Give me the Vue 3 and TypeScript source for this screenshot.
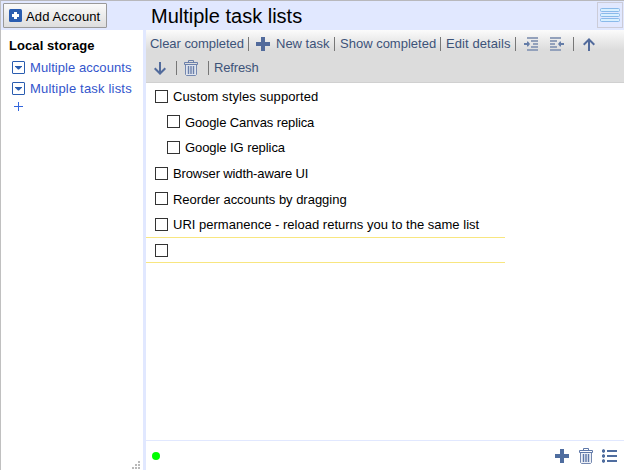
<script setup lang="ts">
interface Entry { title: string; child?: boolean; spacing: string }

const lists: Entry[] = [
  { title: 'Multiple accounts', spacing: '0.06px' },
  { title: 'Multiple task lists', spacing: '0.19px' },
]
const tasks: Entry[] = [
  { title: 'Custom styles supported', spacing: '0.1px' },
  { title: 'Google Canvas replica', child: true, spacing: '-0.11px' },
  { title: 'Google IG replica', child: true, spacing: '-0.07px' },
  { title: 'Browser width-aware UI', spacing: '-0.12px' },
  { title: 'Reorder accounts by dragging', spacing: '-0.02px' },
  { title: 'URI permanence - reload returns you to the same list', spacing: '0.01px' },
]
</script>

<template>
  <div class="app">
    <header class="header">
      <button class="add-account">
        <svg width="13" height="13" viewBox="0 0 13 13"><rect width="13" height="13" rx="1.5" fill="#2a5db0" /><path d="M5 3h3v2h2v3H8v2H5V8H3V5h2z" fill="#fff" /></svg>
        <span class="add-label">Add Account</span>
      </button>
      <h1 class="title">Multiple task lists</h1>
      <button class="menu-button">
        <svg width="20" height="14" viewBox="0 0 20 14" fill="#d8f0ff" stroke="#8abaea"><rect x=".5" y=".5" width="19" height="3" rx="1" /><rect x=".5" y="5.5" width="19" height="3" rx="1" /><rect x=".5" y="10.5" width="19" height="3" rx="1" /></svg>
      </button>
    </header>

    <div class="body">
      <aside class="sidebar">
        <h2 class="account">Local storage</h2>
        <div v-for="item in lists" :key="item.title" class="list">
          <svg width="13" height="13" viewBox="0 0 13 13"><rect x=".5" y=".5" width="12" height="12" rx=".5" fill="#fff" stroke="#2a5db0" /><path d="M3 5h7v.5L7 8.500H6L3 5.500z" fill="#2a5db0" /></svg>
          <span :style="{ letterSpacing: item.spacing }">{{ item.title }}</span>
        </div>
        <svg class="add-list" width="9" height="9" viewBox="0 0 9 9"><path d="M4 0h1v4h4v1H5v4H4V5H0V4h4z" fill="#3366dd" /></svg>
        <svg class="grip" width="8" height="8" viewBox="0 0 8 8" fill="#b9b9b9"><path d="M6 0h2v2H6zM3 3h2v2H3zM6 3h2v2H6zM0 6h2v2H0zM3 6h2v2H3zM6 6h2v2H6z" /></svg>
      </aside>

      <main class="main">
        <div class="toolbar">
          <div class="tools">
            <span class="tool clear">Clear completed</span>
            <i class="sep" />
            <svg class="plus" width="14" height="14" viewBox="0 0 14 14"><path d="M5 0h4v5h5v4H9v5H5V9H0V5h5z" fill="#526b9c" /></svg>
            <span class="tool new">New task</span>
            <i class="sep" />
            <span class="tool show">Show completed</span>
            <i class="sep" />
            <span class="tool edit">Edit details</span>
            <i class="sep" />
            <svg class="indent" width="14" height="14" viewBox="0 0 14 14" fill="#93a1bb"><path d="M3 0h11v2H3zM7 3h7v2H7zM9 6h5v2H9zM7 9h7v2H7zM3 12h11v2H3z" /><path d="M0 6h3V4.500h1L6 7 4 9.500H3V8H0z" fill="#657da8" /></svg>
            <svg class="outdent" width="14" height="14" viewBox="0 0 14 14" fill="#93a1bb"><path d="M0 0h11v2H0zM0 3h7v2H0zM0 6h5v2H0zM0 9h7v2H0zM0 12h11v2H0z" /><path d="M14 6h-3V4.500h-1L8 7l2 2.500h1V8h3z" fill="#657da8" /></svg>
            <i class="sep" />
            <svg class="up" width="12" height="13" viewBox="0 0 12 13" fill="none" stroke="#526b9c" stroke-width="2"><path d="M6 13V1.500M.7 6.800L6 1.500l5.300 5.300" /></svg>
          </div>
          <div class="tools second">
            <svg class="down" width="12" height="13" viewBox="0 0 12 13" fill="none" stroke="#526b9c" stroke-width="2"><path d="M6 0v11.500M.7 6.200L6 11.500l5.300-5.300" /></svg>
            <i class="sep" />
            <svg class="trash" width="14" height="16" viewBox="0 0 14 16" fill="none" stroke="#6b80ab"><path d="M1.500 4.500h11v10l-1 1h-9l-1-1z" fill="#dfe4ee" stroke="#7488b0" /><path d="M4.500 2V.5h5V2M.5 4.500v-2h13v2z" /><path d="M4.500 6v8M7 6v8M9.500 6v8" stroke-width="1.400" /></svg>
            <i class="sep" />
            <span class="tool refresh">Refresh</span>
          </div>
        </div>

        <div class="tasks">
          <div v-for="task in tasks" :key="task.title" class="task" :class="{ child: task.child }">
            <i class="box" /><span class="task-title" :style="{ letterSpacing: task.spacing }">{{ task.title }}</span>
          </div>
          <div class="task active"><i class="box" /></div>
        </div>

        <footer class="footer">
          <i class="status" />
          <svg class="f-plus" width="14" height="14" viewBox="0 0 14 14"><path d="M5 0h4v5h5v4H9v5H5V9H0V5h5z" fill="#4f6d9f" /></svg>
          <svg class="f-trash" width="14" height="16" viewBox="0 0 14 16" fill="none" stroke="#5f78a8"><path d="M1.500 4.500h11v10l-1 1h-9l-1-1z" fill="#edf0f6" stroke="#7488b0" /><path d="M4.500 2V.5h5V2M.5 4.500v-2h13v2z" /><path d="M4.500 6v8M7 6v8M9.500 6v8" stroke-width="1.400" /></svg>
          <svg class="f-list" width="15" height="14" viewBox="0 0 15 14" fill="#4f6d9f"><path d="M5 1h10v2H5zM5 6h10v2H5zM5 11h10v2H5z" /><path d="M1.500 0L3 1v2L1.500 4 0 3V1zM1.500 5L3 6v2L1.500 9 0 8V6zM1.500 10l1.500 1v2l-1.500 1L0 13v-2z" /></svg>
        </footer>
      </main>
    </div>
  </div>
</template>

<style>
body { margin: 0; overflow: hidden; }
</style>

<style scoped>
.app { box-sizing: border-box; width: 624px; height: 470px; display: flex; flex-direction: column; border-top: 1px solid #b8b8bc; border-left: 1px solid #c0c0c0; background: #e1e8ff; color: #000; font: 13px/16px "Liberation Sans", Arial, sans-serif; }
svg { display: block; flex: none; }
.header { display: flex; height: 29px; flex: none; }
.add-account { box-sizing: border-box; width: 104px; height: 25px; margin: 2px 0 0 2px; padding: 0 0 0 5px; display: flex; align-items: center; gap: 4px; border: 1px solid #999; border-radius: 1px; background: linear-gradient(#fafafa, #dedede); color: #000; font: 13px/16px "Liberation Sans", Arial, sans-serif; white-space: nowrap; letter-spacing: .12px; }
.add-label { padding-top: 2px; }
.title { margin: 3px 0 0 44px; font-size: 20px; line-height: 24px; font-weight: normal; white-space: nowrap; }
.menu-button { box-sizing: border-box; width: 26px; height: 26px; margin: 1px 1px 0 auto; padding: 0; display: flex; align-items: center; justify-content: center; border: 1px solid #ccccd8; background: #e1e8ff; }
.body { display: flex; flex: 1; min-height: 0; }
.sidebar { box-sizing: border-box; position: relative; width: 142px; background: #fff; padding: 8px 0 0 8px; }
.account { margin: 0 0 4px; font-size: 13px; line-height: 16px; font-weight: bold; letter-spacing: .08px; }
.list { display: flex; align-items: center; height: 20.500px; padding-left: 3px; gap: 5px; color: #3355cc; white-space: nowrap; }
.list svg { margin-top: -1px; }
.add-list { margin: 3px 0 0 5px; }
.grip { position: absolute; right: 3px; bottom: 1px; }
.main { flex: 1; min-width: 0; margin-left: 3px; background: #fff; display: flex; flex-direction: column; }
.toolbar { box-sizing: border-box; height: 53px; flex: none; padding: 2px 0 0 4px; background: linear-gradient(#fbfbfb, #dcdcdc 20px); border-bottom: 1px solid #d0d0d0; }
.tools { display: flex; align-items: center; height: 24px; }
.tool { color: #3d5379; white-space: nowrap; }
.sep { width: 1px; height: 14px; background: #777; }
.clear { width: 98px; letter-spacing: -.05px; }
.plus { margin: 0 6px 0 7px; }
.new { width: 58px; }
.show { margin-left: 5px; width: 100px; }
.edit { margin-left: 5px; width: 69px; letter-spacing: .08px; }
.indent { margin-left: 8px; }
.outdent { margin: 0 9px 0 12px; }
.up { margin-left: 9px; }
.down { margin: 0 10px 0 4px; }
.trash { margin: 0 10px 0 7px; }
.refresh { margin-left: 5px; letter-spacing: -.15px; }
.tasks { flex: 1; }
.task { box-sizing: border-box; display: flex; align-items: center; width: 359px; height: 25.600px; padding: 1px 0 0 9px; gap: 5px; white-space: nowrap; }
.task-title { padding-top: 2px; }
.child { padding-left: 21px; }
.box { box-sizing: border-box; width: 13px; height: 13px; border: 1px solid #333; background: #fff; }
.active { border-top: 1px solid #f8e680; border-bottom: 1px solid #f8e680; height: 26px; }
.footer { box-sizing: border-box; height: 30px; display: flex; align-items: center; border-top: 1px solid #e1e8ff; padding-left: 6px; }
.status { width: 8px; height: 8px; border-radius: 50%; background: #00ff00; margin-top: 1px; }
.f-plus { margin-left: auto; }
.f-trash { margin: 0 9px 0 10px; }
.f-list { margin-right: 7px; }
</style>
